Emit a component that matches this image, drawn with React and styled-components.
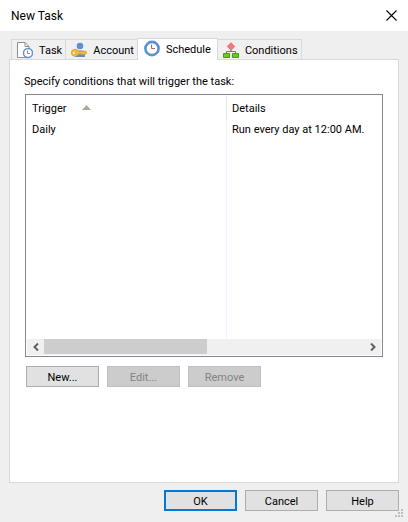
import { useState } from 'react';
import styled, { createGlobalStyle } from 'styled-components';

const GlobalStyle = createGlobalStyle`
  *, *::before, *::after {
    box-sizing: border-box;
  }
  body {
    margin: 0;
    background: #efefef;
  }
  body, button {
    font-family: Roboto, "Liberation Sans", sans-serif;
    font-size: 11px;
    line-height: 14px;
    color: #000;
  }
`;

const TaskIcon = () => (
  <svg width="16" height="17" viewBox="0 0 16 17" fill="none">
    <path d="M.5.5H8l4 4v11H.5z" fill="#fff" stroke="#8e8e8e" />
    <path d="M8 .5v4h4" stroke="#8e8e8e" />
    <circle cx="11" cy="11" r="4.5" fill="#fff" stroke="#5b91d2" strokeWidth="1.4" />
    <path d="M10.5 8.5v3H13" stroke="#d07070" />
  </svg>
);

const AccountIcon = () => (
  <svg width="16" height="17" viewBox="0 0 16 17" fill="none">
    <circle cx="9" cy="4" r="3.3" fill="#5b91d2" />
    <path d="M4 15v-3c0-3 2-3.500 5-3.500s5 .5 5 3.500v3z" fill="#5b91d2" />
    <path
      d="M4 7.300c2 0 3 .9 3.500 1.900H15l1 1.300-1 1.500h-1l-.8 1-1-1-1 1-1-1H7.500c-.5 1.200-1.500 2.200-3.500 2.200C1.700 14.200.3 12.800.3 10.800S1.700 7.300 4 7.300z"
      fill="#f5b83c"
      stroke="#c9962a"
      strokeWidth=".7"
    />
    <circle cx="2.800" cy="11" r="1" fill="#fff" />
  </svg>
);

const ScheduleIcon = () => (
  <svg width="16" height="17" viewBox="0 0 16 17" fill="none">
    <circle cx="8" cy="8.500" r="6.600" fill="#fff" stroke="#5b91d2" strokeWidth="2.600" />
    <path d="M7.500 4.500v4H11" stroke="#c95b5b" />
  </svg>
);

const ConditionsIcon = () => (
  <svg width="16" height="17" viewBox="0 0 16 17" fill="none">
    <path d="M8 8v2M3.500 12V9.500h9V12" stroke="#777" />
    <path d="M8 .8 11.700 4.500 8 8.200 4.300 4.500z" fill="#f87878" stroke="#e86a6a" />
    <path d="M.5 11.500h6v4h-6zM9.500 11.500h6v4h-6z" fill="#6cc91e" stroke="#4a9a10" />
  </svg>
);

const TABS = [
  { name: 'Task', Icon: TaskIcon },
  { name: 'Account', Icon: AccountIcon },
  { name: 'Schedule', Icon: ScheduleIcon },
  { name: 'Conditions', Icon: ConditionsIcon },
];

const App = () => {
  const [active, setActive] = useState('Schedule');

  return (
    <S.Dialog role="dialog" aria-labelledby="title">
      <GlobalStyle />
      <S.TitleBar>
        <S.Title id="title">New Task</S.Title>
        <S.Close aria-label="Close">
          <svg width="11" height="11" viewBox="0 0 11 11">
            <path d="M.5.5l10 10M10.500.5l-10 10" stroke="#000" strokeWidth="1.100" />
          </svg>
        </S.Close>
      </S.TitleBar>

      <S.Tabs role="tablist">
        {TABS.map(({ name, Icon }) => (
          <S.Tab
            key={name}
            role="tab"
            aria-selected={name === active}
            $active={name === active}
            onClick={() => setActive(name)}
          >
            <Icon />
            <S.TabLabel>{name}</S.TabLabel>
          </S.Tab>
        ))}
      </S.Tabs>

      <S.Panel role="tabpanel">
        <S.Caption id="caption">Specify conditions that will trigger the task:</S.Caption>
        <S.List>
          <S.Table aria-labelledby="caption">
            <thead>
              <tr>
                <S.Head $first>
                  Trigger
                  <S.Sort width="9" height="5" viewBox="0 0 9 5">
                    <path d="M4.500 0 9 5H0z" fill="#aca899" />
                  </S.Sort>
                </S.Head>
                <S.Head>Details</S.Head>
              </tr>
            </thead>
            <tbody>
              <tr>
                <S.Cell>Daily</S.Cell>
                <S.Cell>Run every day at 12:00 AM.</S.Cell>
              </tr>
            </tbody>
          </S.Table>
          <S.ScrollBar>
            <S.Arrow aria-label="Scroll left">
              <svg width="6" height="8" viewBox="0 0 6 8" fill="none">
                <path d="M5 .5 1.500 4 5 7.500" stroke="#606060" strokeWidth="2" />
              </svg>
            </S.Arrow>
            <S.Track>
              <S.Thumb />
            </S.Track>
            <S.Arrow aria-label="Scroll right">
              <svg width="6" height="8" viewBox="0 0 6 8" fill="none">
                <path d="M1 .5 4.500 4 1 7.500" stroke="#606060" strokeWidth="2" />
              </svg>
            </S.Arrow>
          </S.ScrollBar>
        </S.List>
        <S.Actions>
          <S.Button>New...</S.Button>
          <S.Button disabled>Edit...</S.Button>
          <S.Button disabled>Remove</S.Button>
        </S.Actions>
      </S.Panel>

      <S.Footer>
        <S.Button $primary>OK</S.Button>
        <S.Button>Cancel</S.Button>
        <S.Button>Help</S.Button>
        <S.Grip width="8" height="8" viewBox="0 0 8 8">
          <path d="M6 0h2v2H6zM3 3h2v2H3zM6 3h2v2H6zM0 6h2v2H0zM3 6h2v2H3zM6 6h2v2H6z" fill="#bfbfbf" />
        </S.Grip>
      </S.Footer>
    </S.Dialog>
  );
}

const S = {
  Dialog: styled.div`
    position: relative;
    display: flex;
    flex-direction: column;
    min-height: 100vh;
    background: #efefef;
  `,
  TitleBar: styled.header`
    display: flex;
    justify-content: space-between;
    align-items: center;
    height: 31px;
    padding: 0 11px;
    background: #fff;
  `,
  Title: styled.h1`
    margin: 0;
    font-size: 12px;
    line-height: 16px;
    font-weight: normal;
  `,
  Close: styled.button`
    display: flex;
    padding: 0;
    border: none;
    background: none;
  `,
  Tabs: styled.div`
    display: flex;
    align-items: flex-end;
    height: 28px;
    padding-left: 11px;
  `,
  Tab: styled.button`
    position: relative;
    display: flex;
    align-items: center;
    gap: 6px;
    height: ${(props) => props.$active ? '22px' : '20px'};
    margin: 0 0 ${(props) => props.$active ? '-1px' : '0'} -1px;
    padding: ${(props) => props.$active ? '0 6px 2px' : '1px 3px 0 5px'};
    border: 1px solid #d9d9d9;
    border-bottom: none;
    background: ${(props) => props.$active ? '#fff' : '#f0f0f0'};

    &:first-child {
      margin-left: 0;
    }
  `,
  TabLabel: styled.span`
    padding-top: 2px;
  `,
  Panel: styled.main`
    display: flex;
    flex: 1;
    flex-direction: column;
    margin: 0 9px;
    padding: 15px 15px 95px 14px;
    border: 1px solid #d9d9d9;
    background: #fff;
  `,
  Caption: styled.p`
    margin: 0 0 5px;
  `,
  List: styled.div`
    display: flex;
    flex: 1;
    flex-direction: column;
    min-height: 120px;
    margin-left: 1px;
    padding: 1px;
    border: 1px solid #828790;
    background: linear-gradient(#ebf4fe, #ebf4fe) 200px 0 / 1px calc(100% - 18px) no-repeat;
  `,
  Table: styled.table`
    flex: 1;
    display: block;
    border-spacing: 0;
    text-align: left;
    white-space: nowrap;
  `,
  Head: styled.th`
    min-width: ${(props) => props.$first ? '200px' : 'auto'};
    height: 24px;
    padding: 2px 5px 0;
    border-right: ${(props) => props.$first ? '1px solid #e5e5e5' : 'none'};
    font-weight: normal;
  `,
  Sort: styled.svg`
    margin-left: 16px;
    vertical-align: 2px;
  `,
  Cell: styled.td`
    height: 18px;
    padding: 2px 5px 0;
  `,
  ScrollBar: styled.div`
    display: flex;
    height: 16px;
    background: #f0f0f0;
  `,
  Arrow: styled.button`
    display: flex;
    justify-content: center;
    align-items: center;
    width: 17px;
    padding: 0;
    border: none;
    background: none;
  `,
  Track: styled.div`
    flex: 1;
  `,
  Thumb: styled.div`
    width: 51%;
    height: 15px;
    background: #cdcdcd;
  `,
  Actions: styled.div`
    display: flex;
    gap: 8px;
    margin: 9px 0 0 2px;
  `,
  Button: styled.button`
    width: 73px;
    height: 21px;
    padding: 2px 0 0;
    border: ${(props) => props.$primary ? '2px solid #0078d7' : '1px solid #adadad'};
    background: #e1e1e1;

    &:disabled {
      border-color: #bfbfbf;
      background: #cccccc;
      color: #838383;
    }
  `,
  Footer: styled.footer`
    display: flex;
    justify-content: flex-end;
    gap: 8px;
    padding: 7px 9px 11px;
  `,
  Grip: styled.svg`
    position: absolute;
    right: 5px;
    bottom: 5px;
  `,
}

export default App;
